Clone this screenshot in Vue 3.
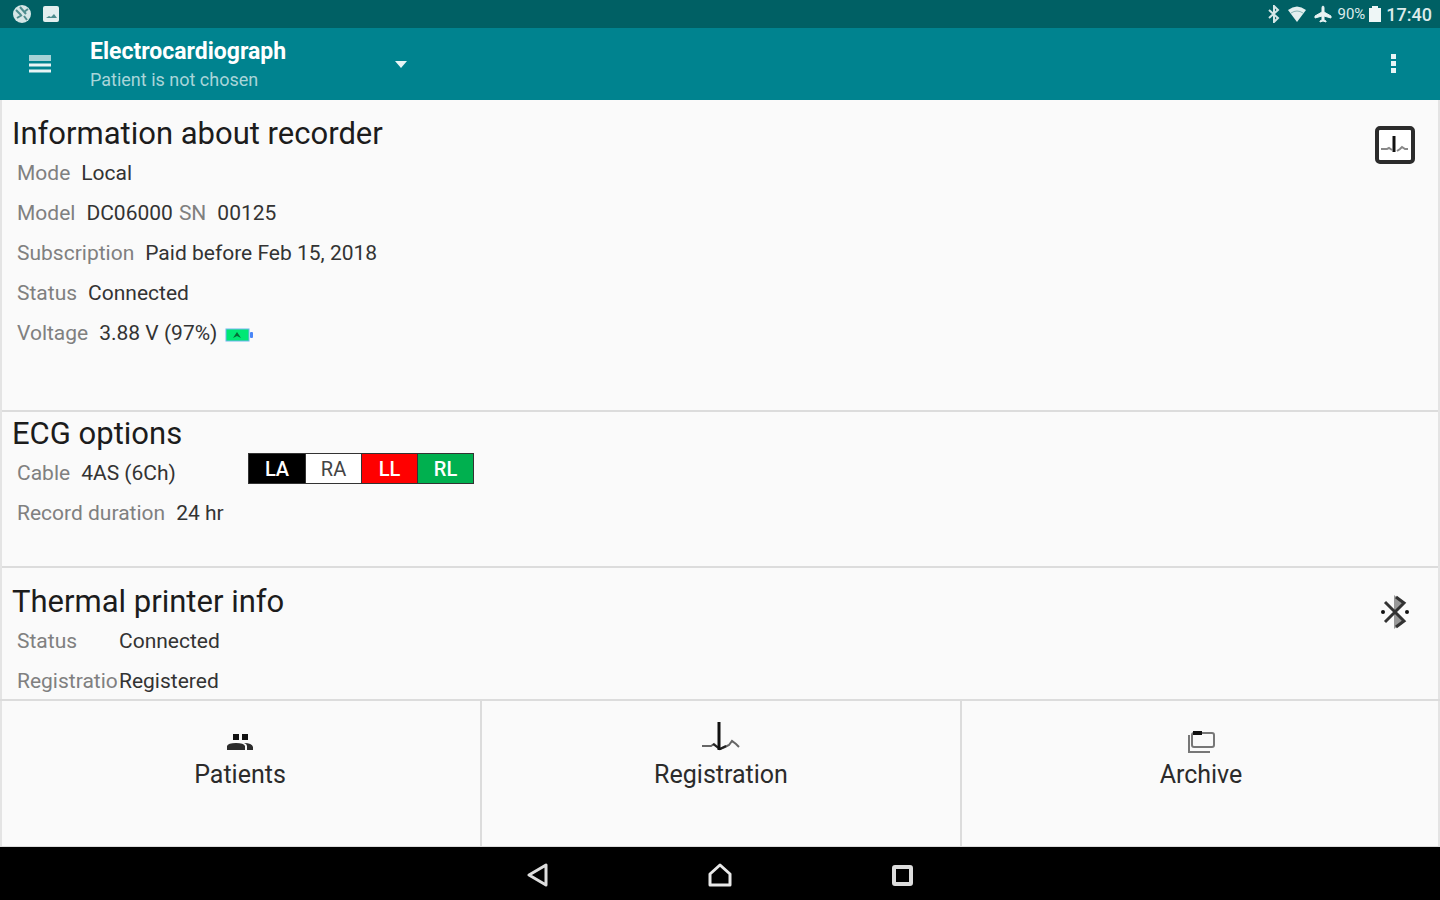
<script setup>
import { ref } from 'vue'

const screen = ref('Electrocardiograph')

const recorder = [
  [{ label: 'Mode', value: 'Local' }],
  [
    { label: 'Model', value: 'DC06000' },
    { label: 'SN', value: '00125' },
  ],
  [{ label: 'Subscription', value: 'Paid before Feb 15, 2018' }],
  [{ label: 'Status', value: 'Connected' }],
  [{ label: 'Voltage', value: '3.88 V (97%)', battery: true }],
]

const leads = [
  { name: 'LA', type: 'black' },
  { name: 'RA', type: 'white' },
  { name: 'LL', type: 'red' },
  { name: 'RL', type: 'green' },
]

const printer = [
  { label: 'Status', value: 'Connected' },
  { label: 'Registration', value: 'Registered' },
]
</script>

<template>
  <div class="page">
    <div class="status-bar">
      <div class="status-group notifications">
        <svg width="20" height="20" viewBox="0 0 20 20">
          <circle cx="10" cy="10" r="9" fill="#d5e6e6" />
          <path d="M4 6l5 5M8 3l6 7M12 8l4-3M5 14l5-3M12 12l3 4" stroke="#4d8c8d" stroke-width="2" />
        </svg>
        <svg width="18" height="18" viewBox="0 0 18 18">
          <rect x="1" y="1" width="16" height="16" rx="2" fill="#e3efef" />
          <path d="M4 13l3-2 2 1 3-3 3 4z" fill="#4d8c8d" />
        </svg>
      </div>
      <div class="status-group">
        <svg width="12" height="18" viewBox="0 0 12 18">
          <path d="M1 5l9 8-4 4V1l4 4-9 8" fill="none" stroke="#d5e6e6" stroke-width="2" />
        </svg>
        <svg class="wifi" width="20" height="18" viewBox="0 0 20 18">
          <path d="M1 5Q10-2 19 5L10 17z" fill="#e3efef" />
          <path d="M4 8q6-4 12 0" fill="none" stroke="#8ab5b6" />
        </svg>
        <svg class="plane" width="18" height="18" viewBox="0 0 18 18">
          <path d="M9 1q1 0 1 2v4l7 4v2l-7-2v4l2 1v1l-3-1-3 1v-1l2-1v-4l-7 2v-2l7-4V3q0-2 1-2z" fill="#e9f3f3" stroke="#e9f3f3" />
        </svg>
        <span class="percent">90%</span>
        <svg class="cell" width="12" height="16" viewBox="0 0 12 16">
          <path d="M3 0h6v2h3v14H0V2h3z" fill="#eef6f6" />
        </svg>
        <span class="clock">17:40</span>
      </div>
    </div>

    <header class="app-bar">
      <button class="icon-button" aria-label="Menu">
        <svg width="22" height="20" viewBox="0 0 22 20">
          <path d="M0 4h22" stroke="#a5d2d6" stroke-width="6" />
          <path d="M0 11h22M0 17h22" stroke="#e8f5f6" stroke-width="3" />
        </svg>
      </button>
      <button class="screen-picker" aria-label="Choose screen">
        <span class="names">
          <span class="screen-name">{{ screen }}</span>
          <span class="patient">Patient is not chosen</span>
        </span>
        <svg width="12" height="7" viewBox="0 0 12 7"><path d="M0 0h12L6 7z" fill="#e8f5f6" /></svg>
      </button>
      <button class="icon-button more" aria-label="More">
        <svg width="6" height="20" viewBox="0 0 6 20">
          <path d="M0 0h5v5H0zM0 7h5v5H0zM0 14h5v5H0z" fill="#e8f5f6" />
        </svg>
      </button>
    </header>

    <main class="content">
      <section class="card recorder">
        <h2>Information about recorder</h2>
        <svg class="card-icon" width="40" height="38" viewBox="0 0 40 38">
          <rect x="2" y="2" width="36" height="34" rx="3" fill="#fff" stroke="#2b2b2b" stroke-width="4" />
          <path d="M6 23h6l2-1 3 2M22 25l3-2 2-2 3 2h3" fill="none" stroke="#888" stroke-width="2" />
          <path d="M19 10v16" stroke="#111" stroke-width="3" />
        </svg>
        <div v-for="(row, i) in recorder" :key="i" class="row">
          <template v-for="item in row" :key="item.label">
            <span class="label">{{ item.label }}</span>
            <span class="value">{{ item.value }}</span>
            <svg v-if="item.battery" class="battery" width="28" height="14" viewBox="0 0 28 14">
              <rect x="1" y="1" width="23" height="12" fill="#00e874" stroke="#6fb5ee" />
              <rect x="25" y="4" width="3" height="6" rx="1" fill="#4a86f7" />
              <path d="M8 10l4-6 4 6-4-2z" fill="#056b36" />
            </svg>
          </template>
        </div>
      </section>

      <section class="card options">
        <h2>ECG options</h2>
        <div class="row">
          <span class="cable">
            <span class="label">Cable</span>
            <span class="value">4AS (6Ch)</span>
          </span>
          <span class="leads">
            <span v-for="lead in leads" :key="lead.name" class="lead" :class="lead.type">{{ lead.name }}</span>
          </span>
        </div>
        <div class="row">
          <span class="label">Record duration</span>
          <span class="value">24 hr</span>
        </div>
      </section>

      <section class="card printer">
        <h2>Thermal printer info</h2>
        <svg class="card-icon" width="30" height="36" viewBox="0 0 30 36">
          <path d="M14 1v34l10-8-8-9 8-9z" fill="#999" />
          <path d="M5 8l19 19-8 6M16 3l8 6L5 28" fill="none" stroke="#333" stroke-width="3" />
          <circle cx="3" cy="18" r="2" fill="#111" />
          <circle cx="27" cy="18" r="2" fill="#111" />
        </svg>
        <div v-for="item in printer" :key="item.label" class="row">
          <span class="label">{{ item.label }}</span>
          <span class="value">{{ item.value }}</span>
        </div>
      </section>
    </main>

    <nav class="tabs">
      <button class="tab">
        <svg width="40" height="36" viewBox="0 0 40 36">
          <path d="M13 13h6v6h-6zM22 13h6v6h-6z" fill="#111" />
          <path d="M7 29v-4q1-3 9-3 8 0 9 3v4zM24 22q8 0 9 4v3h-6v-4q0-2-3-3z" fill="#2b2b2b" />
        </svg>
        Patients
      </button>
      <button class="tab">
        <svg width="40" height="36" viewBox="0 0 40 36">
          <path d="M1 25h9l3-2 6 5 5-2 4-2 3-4 4 3 3 3" fill="none" stroke="#666" stroke-width="2" />
          <path d="M12 23l7 5 6-3" fill="none" stroke="#222" stroke-width="2" />
          <path d="M18 1v28" stroke="#111" stroke-width="3" />
        </svg>
        Registration
      </button>
      <button class="tab">
        <svg width="40" height="36" viewBox="0 0 40 36">
          <path d="M13 12h18q2 0 2 2v10q0 2-2 2H13q-2 0-2-2V14q0-2 2-2zM8 14v17h21" fill="none" stroke="#777" stroke-width="2" />
          <path d="M12 12h9" stroke="#111" stroke-width="4" />
        </svg>
        Archive
      </button>
    </nav>

    <footer class="system-nav">
      <button aria-label="Back">
        <svg width="24" height="24" viewBox="0 0 24 24">
          <path d="M20 2v20L3 12z" fill="none" stroke="#ddd" stroke-width="3" stroke-linejoin="round" />
        </svg>
      </button>
      <button aria-label="Home">
        <svg width="26" height="24" viewBox="0 0 26 24">
          <path d="M3 22V11l10-9 10 9v11z" fill="none" stroke="#e8e8e8" stroke-width="3" stroke-linejoin="round" />
        </svg>
      </button>
      <button aria-label="Recent apps">
        <svg width="24" height="24" viewBox="0 0 24 24">
          <rect x="4" y="4" width="17" height="17" rx="1" fill="none" stroke="#ddd" stroke-width="4" />
        </svg>
      </button>
    </footer>
  </div>
</template>

<style>
body {
  margin: 0;
}
</style>

<style scoped>
.page {
  display: flex;
  flex-direction: column;
  height: 100vh;
  background: #fafafa;
  color: #333;
  font-family: Roboto, 'Liberation Sans', sans-serif;
}

button {
  padding: 0;
  border: 0;
  background: none;
  color: inherit;
  font-family: inherit;
  cursor: pointer;
}

svg {
  display: block;
  flex: none;
}

/* Barre d'état */
.status-bar {
  display: flex;
  flex: none;
  align-items: center;
  justify-content: space-between;
  height: 28px;
  padding: 0 8px 0 12px;
  background: #006064;
  color: #dcebeb;
}

.status-group {
  display: flex;
  align-items: center;
}

.notifications {
  gap: 10px;
}

.wifi,
.plane {
  margin-left: 7px;
}

.percent {
  margin: 0 4px 0 5px;
  font-size: 15px;
}

.clock {
  margin-left: 5px;
  font-size: 18px;
  font-weight: 500;
}

/* Barre de titre */
.app-bar {
  display: flex;
  flex: none;
  align-items: center;
  height: 72px;
  padding: 0 29px;
  box-sizing: border-box;
  background: #00838f;
  color: #fff;
}

.screen-picker {
  display: flex;
  align-items: center;
  justify-content: space-between;
  width: 317px;
  margin-left: 39px;
  text-align: left;
}

.names {
  display: flex;
  flex-direction: column;
  padding-top: 4px;
}

.screen-name {
  font-size: 23px;
  font-weight: 700;
  line-height: 28px;
}

.patient {
  color: #a9d5d9;
  font-size: 18px;
  line-height: 28px;
}

.more {
  margin-left: auto;
  padding-right: 14px;
}

/* Sections */
.content {
  display: flex;
  flex: 1;
  flex-direction: column;
  min-height: 0;
  overflow: hidden;
  border: 0 solid #e4e4e4;
  border-width: 0 2px;
}

.card {
  position: relative;
  padding: 15px 10px 0;
  border-top: 2px solid #dcdcdc;
}

.recorder {
  padding-bottom: 57px;
  border-top: 0;
}

.options {
  padding-top: 3px;
  padding-bottom: 33px;
}

h2 {
  margin: 0;
  color: #1c1c1c;
  font-size: 31px;
  font-weight: 400;
  line-height: 38px;
}

.card-icon {
  position: absolute;
  top: 26px;
  right: 23px;
}

.printer .card-icon {
  right: 28px;
}

.row {
  display: flex;
  align-items: center;
  height: 40px;
  padding-left: 5px;
  font-size: 21px;
  white-space: nowrap;
}

.label {
  margin-right: 11px;
  color: #808080;
}

.value + .label {
  margin-left: 6px;
}

.battery {
  margin-top: 3px;
  margin-left: 8px;
}

.cable {
  width: 231px;
}

.leads {
  display: grid;
  grid-template-columns: repeat(4, 56px);
  align-self: flex-start;
  border: 1px solid #333;
}

.lead {
  padding-top: 2px;
  color: #fff;
  font-size: 20px;
  font-weight: 500;
  line-height: 27px;
  text-align: center;
}

.lead + .lead {
  border-left: 1px solid #333;
}

.black {
  background: #000;
}

.white {
  background: #fff;
  color: #444;
  font-weight: 400;
}

.red {
  background: #f00;
}

.green {
  background: #00b04f;
}

.printer .label {
  width: 102px;
  margin-right: 0;
  overflow: hidden;
}

/* Onglets */
.tabs {
  display: grid;
  flex: none;
  grid-template-columns: repeat(3, 1fr);
  height: 148px;
  box-sizing: border-box;
  border-top: 2px solid #dcdcdc;
  border-bottom: 1px solid #dcdcdc;
  box-shadow: inset 2px 0 #e4e4e4, inset -2px 0 #e4e4e4;
}

.tab {
  display: flex;
  flex-direction: column;
  align-items: center;
  padding-top: 20px;
  color: #2b2b2b;
  font-size: 25px;
  line-height: 36px;
}

.tab + .tab {
  border-left: 2px solid #dcdcdc;
}

/* Navigation système */
.system-nav {
  display: grid;
  flex: none;
  grid-template-columns: repeat(3, 182px);
  justify-content: center;
  height: 53px;
  background: #000;
}

.system-nav button {
  display: flex;
  align-items: center;
  justify-content: center;
  padding-top: 3px;
}
</style>
